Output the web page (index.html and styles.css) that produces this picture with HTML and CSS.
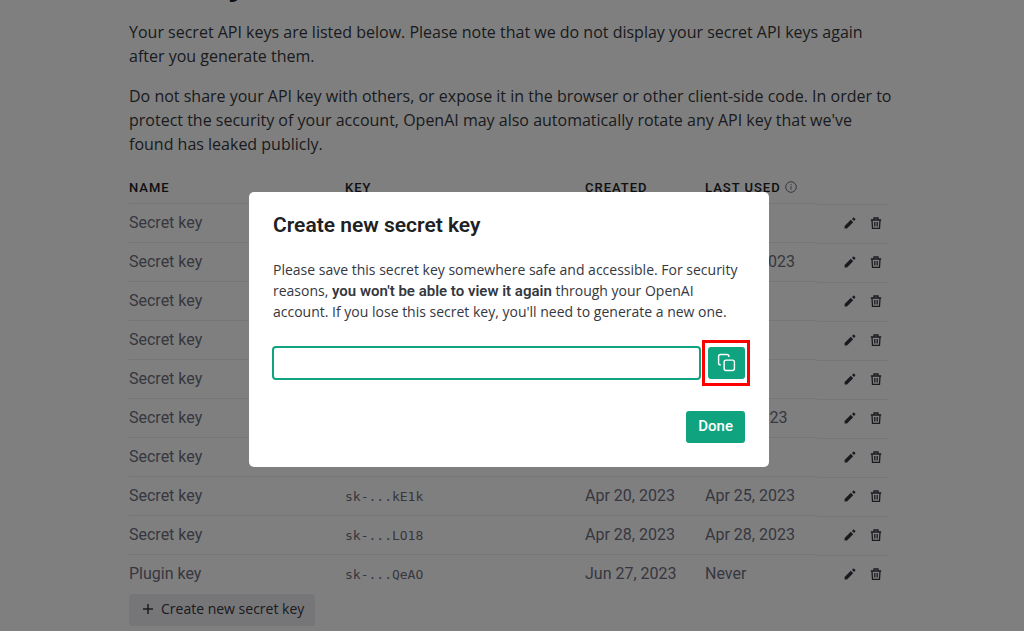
FILE: index.html
```html
<!DOCTYPE html>
<html lang="en">
<head>
<meta charset="utf-8">
<meta name="viewport" content="width=device-width, initial-scale=1">
<title>API keys</title>
<link rel="stylesheet" href="styles.css">
</head>
<body>
<main class="page">
  <h1 class="page-title">API keys</h1>
  <p class="intro">Your secret API keys are listed below. Please note that we do not display your secret API keys again<br>after you generate them.</p>
  <p class="intro">Do not share your API key with others, or expose it in the browser or other client-side code. In order to<br>protect the security of your account, OpenAI may also automatically rotate any API key that we've<br>found has leaked publicly.</p>
  <table class="keys">
    <colgroup><col class="col-name"><col class="col-key"><col class="col-created"><col class="col-used"><col class="col-actions"></colgroup>
    <thead>
      <tr>
        <th>Name</th><th>Key</th><th>Created</th>
        <th>Last used <svg class="info" viewBox="0 0 12 12" aria-hidden="true"><circle cx="6" cy="6" r="5.3"/><path d="M6 5.2v3.4M6 3.1v1.1"/></svg></th>
        <th class="actions"></th>
      </tr>
    </thead>
    <tbody id="rows"></tbody>
  </table>
  <button class="create" type="button"><svg class="plus" viewBox="0 0 12 12" aria-hidden="true"><path d="M6 1v10M1 6h10"/></svg>Create new secret key</button>
</main>
<div class="overlay">
  <section class="dialog" role="dialog" aria-modal="true" aria-labelledby="dialog-title">
    <h2 class="dialog-title" id="dialog-title">Create new secret key</h2>
    <p class="dialog-text">Please save this secret key somewhere safe and accessible. For security<br>reasons, <strong>you won't be able to view it again</strong> through your OpenAI<br>account. If you lose this secret key, you'll need to generate a new one.</p>
    <div class="key-row">
      <input class="key-input" type="text" aria-label="Secret key" readonly>
      <div class="highlight">
        <button class="copy" type="button" aria-label="Copy"><svg viewBox="0 0 24 24" aria-hidden="true"><rect x="9" y="9" width="13" height="13" rx="2.5"/><path d="M5 15h-.5A2.500 2.500 0 0 1 2 12.500V4.500A2.500 2.500 0 0 1 4.500 2h8A2.500 2.500 0 0 1 15 4.500V5"/></svg></button>
      </div>
    </div>
    <button class="done" type="button">Done</button>
  </section>
</div>
<script src="keys.js"></script>
</body>
</html>
```

FILE: styles.css
```css
* { box-sizing: border-box; }
body {
  margin: 0;
  background: #fff;
  color: #353740;
  font-family: "Open Sans", "Liberation Sans", sans-serif;
  font-size: 16px;
  line-height: 24px;
  overflow: hidden;
}
button, input { font: inherit; }
button { border: 0; padding: 0; cursor: pointer; }
svg { fill: none; stroke: currentColor; }

.page {
  width: 760px;
  max-width: 100%;
  margin: 0 auto;
  position: relative;
  right: 3px;
}
.page-title {
  margin: -36px 0 20px;
  color: #202123;
  font-size: 32px;
  line-height: 36px;
  font-weight: 700;
}
.intro { margin: 0 0 16px; white-space: nowrap; }

.keys {
  width: 100%;
  margin-top: 19px;
  table-layout: fixed;
  border-collapse: separate;
  border-spacing: 0;
}
.col-name { width: 216px; }
.col-key { width: 240px; }
.col-created { width: 120px; }
.col-used { width: 112px; }
.col-actions { width: 72px; }
.keys th, .keys td {
  padding: 0;
  border-bottom: 1px solid #ececf1;
  text-align: left;
  white-space: nowrap;
}
.keys th {
  height: 29px;
  padding-bottom: 3px;
  color: #202123;
  font-family: Roboto, sans-serif;
  font-size: 13px;
  line-height: 16px;
  font-weight: 500;
  letter-spacing: 1px;
  text-transform: uppercase;
}
.keys td { height: 39px; color: #6e6e80; font-family: Roboto, sans-serif; font-size: 16px; }
.keys .key { padding-top: 2px; font-family: "DejaVu Sans Mono", monospace; font-size: 13px; }
.keys .actions { border-bottom-color: transparent; box-shadow: 0 1px 0 #ececf1; }
.keys tbody tr:last-child td { border-bottom-color: transparent; box-shadow: none; }
.info { width: 12px; height: 12px; vertical-align: -1px; color: #6e6e80; }
.icons { display: flex; justify-content: flex-end; gap: 14px; padding-right: 7px; }
.icon { display: flex; background: none; color: #353740; }
.icon svg { width: 12px; height: 12px; }

.create {
  display: flex;
  align-items: center;
  gap: 7px;
  height: 32px;
  padding: 0 11px 2px 13px;
  border-radius: 3px;
  background: #ececf1;
  color: #353740;
  font-size: 14px;
}
.plus { width: 12px; height: 12px; stroke-width: 1.5; }

.overlay {
  position: fixed;
  inset: 0;
  display: flex;
  align-items: flex-start;
  justify-content: center;
  padding: 192px 6px 0 0;
  background: rgba(0, 0, 0, 0.5);
}
.dialog {
  display: flex;
  flex-direction: column;
  width: 520px;
  max-width: 100%;
  padding: 21px 24px 24px;
  border-radius: 5px;
  background: #fff;
}
.dialog-title {
  margin: 0 0 22px;
  color: #202123;
  font-family: Roboto, sans-serif;
  font-size: 21px;
  line-height: 24px;
  font-weight: 600;
}
.dialog-text { margin: 0 0 18px; font-size: 14px; line-height: 21px; white-space: nowrap; }
.dialog-text strong { font-family: Roboto, sans-serif; font-size: 15px; font-weight: 600; line-height: 1; }
.key-row { display: flex; align-items: center; gap: 1px; margin: 0 -5px 0 -1px; }
.key-input {
  flex: 1;
  min-width: 0;
  height: 34px;
  padding: 0 10px;
  border: 2px solid #10a37f;
  border-radius: 4px;
  background: #fff;
  outline: 0;
}
.highlight { padding: 4px 2px 4px 3px; border: 3px solid #f00; }
.copy {
  display: grid;
  place-items: center;
  width: 37px;
  height: 32px;
  padding-bottom: 1px;
  border-radius: 3px;
  background: #10a37f;
  color: #fff;
}
.copy svg { width: 19px; height: 19px; stroke-width: 1.8; }
.done {
  align-self: flex-end;
  height: 32px;
  margin-top: 25px;
  padding: 0 12px 2px;
  border-radius: 3px;
  background: #10a37f;
  color: #fff;
  font-family: Roboto, sans-serif;
  font-size: 15px;
  font-weight: 500;
}
```

FILE: keys.js
```js
const keys = [
  ["Secret key", "", "", ""],
  ["Secret key", "", "", "Apr 20, 2023"],
  ["Secret key", "", "", ""],
  ["Secret key", "", "", ""],
  ["Secret key", "", "", ""],
  ["Secret key", "", "", "Jun 8, 2023"],
  ["Secret key", "", "", ""],
  ["Secret key", "sk-...kE1k", "Apr 20, 2023", "Apr 25, 2023"],
  ["Secret key", "sk-...LO18", "Apr 28, 2023", "Apr 28, 2023"],
  ["Plugin key", "sk-...QeAO", "Jun 27, 2023", "Never"]
];
const pencil = '<svg viewBox="0 0 12 12" aria-hidden="true"><path d="M.6 11.4V9L6.800 2.800l2.400 2.400L3 11.400zM8 2l1.200-1.200q.5-.5 1 0l1 1q.5.5 0 1L10 4z" fill="currentColor" stroke="none"/></svg>';
const trash = '<svg viewBox="0 0 12 12" aria-hidden="true"><path d="M.8 3h10.400M4 3V1h4v2M2 3l.5 8.300h7L10 3M4.800 5v4.400M7.200 5v4.400" stroke-width="1.3"/></svg>';
document.getElementById("rows").innerHTML = keys.map(([name, key, created, used]) => `
  <tr><td>${name}</td><td class="key">${key}</td><td>${created}</td><td>${used}</td>
  <td class="actions"><div class="icons">
    <button class="icon" type="button" aria-label="Edit">${pencil}</button>
    <button class="icon" type="button" aria-label="Delete">${trash}</button>
  </div></td></tr>`).join("");
```
